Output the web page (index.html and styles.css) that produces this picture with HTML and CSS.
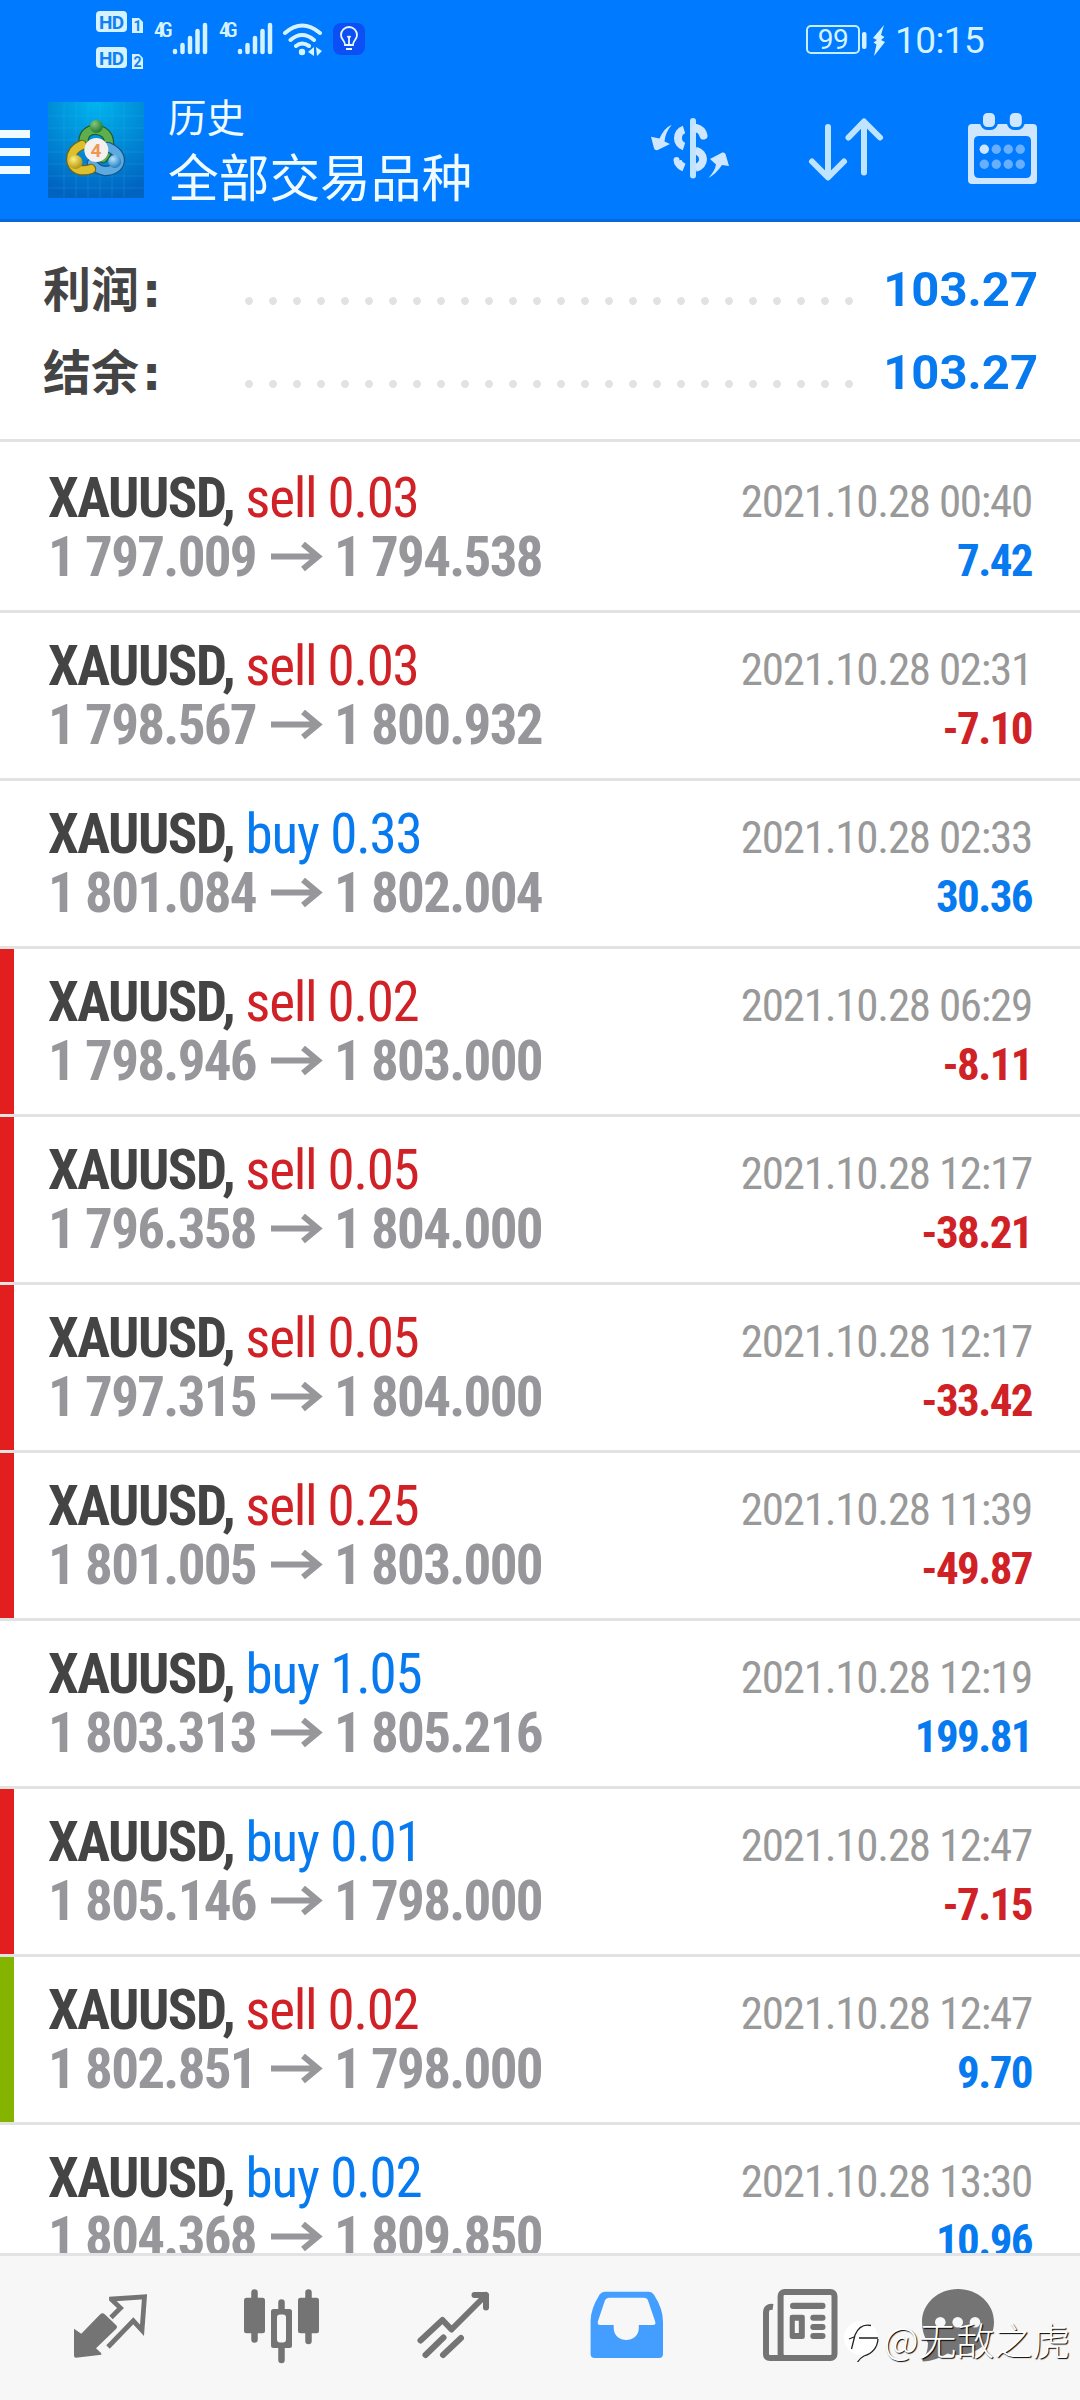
FILE: index.html
```html
<!DOCTYPE html>
<html lang="zh-CN">
<head>
<meta charset="utf-8">
<title>历史</title>
<link rel="stylesheet" href="styles.css">
</head>
<body>
<div class="screen">
  <header class="header">
    <div class="status">
      <svg class="hd" width="48" height="60" viewBox="0 0 48 60">
        <rect x="0" y="0" width="31" height="21" rx="4"/>
        <rect x="0" y="36" width="31" height="21" rx="4"/>
        <path d="M36 7h7l4 4v11H36zM36 43h7l4 4v11H36z"/>
        <text class="hd-label" x="15.5" y="17.500" textLength="25">HD</text>
        <text class="hd-label" x="15.5" y="53.500" textLength="25">HD</text>
        <text class="hd-num" x="41.500" y="20">1</text>
        <text class="hd-num" x="41.500" y="56">2</text>
      </svg>
      <svg class="signal" width="56" height="36" viewBox="0 0 56 36">
        <text class="net" x="-1" y="16" textLength="18.500">4G</text>
        <path d="M20 30v1M27.500 24v7M35 17v14M42.500 10v21M50 4v27"/>
      </svg>
      <svg class="signal second" width="56" height="36" viewBox="0 0 56 36">
        <text class="net" x="-1" y="16" textLength="18.500">4G</text>
        <path d="M20 30v1M27.500 24v7M35 17v14M42.500 10v21M50 4v27"/>
      </svg>
      <svg class="wifi" width="40" height="36" viewBox="0 0 40 36">
        <path class="arc" d="M2 11Q19-4 37 11M7.500 18Q19 8 31 18M13 24Q19 19 26 24"/>
        <circle cx="19" cy="30" r="3.200"/>
        <path d="M31 25v9l-6-4zM33 25l6 4-5 5z"/>
      </svg>
      <svg class="bulb" width="32" height="32" viewBox="0 0 32 32">
        <rect width="32" height="32" rx="8"/>
        <path d="M12 22c0-5-4-5-4-10a8 8 0 0 1 16 0c0 5-4 5-4 10zM13 26h6M16 15v6M14.500 13l1.500 2 1.500-2"/>
      </svg>
      <span class="spacer"></span>
      <span class="battery">99</span>
      <svg class="charge" width="24" height="34" viewBox="0 0 24 34">
        <rect x="2" y="8" width="4.500" height="17" rx="2"/>
        <path d="M24 1L13 14l4 2-3.500 2.500 3 2L14 32l11-14-4-2 3.500-3-3.500-2z"/>
      </svg>
      <span class="clock">10:15</span>
    </div>
    <div class="appbar">
      <div class="menu"><i></i><i></i><i></i></div>
      <svg class="logo" width="96" height="96" viewBox="0 0 96 96">
        <defs>
          <radialGradient id="bg" cx=".5" cy="0" r="1"><stop offset="0" stop-color="#00b5ee"/><stop offset="1" stop-color="#0063c0"/></radialGradient>
          <radialGradient id="g" cx=".35" cy=".3" r=".8"><stop offset="0" stop-color="#86c878"/><stop offset="1" stop-color="#15702d"/></radialGradient>
          <radialGradient id="y" cx=".35" cy=".3" r=".8"><stop offset="0" stop-color="#fff07b"/><stop offset="1" stop-color="#ac8a05"/></radialGradient>
          <radialGradient id="b" cx=".35" cy=".3" r=".8"><stop offset="0" stop-color="#b4e4ff"/><stop offset="1" stop-color="#1673bb"/></radialGradient>
        </defs>
        <rect width="96" height="96" fill="url(#bg)"/>
        <path d="M16 0v96M28 0v96M40 0v96M52 0v96M64 0v96M76 0v96M0 14h96M0 26h96M0 38h96M0 50h96M0 62h96M0 74h96M0 86h96" stroke="#45baf0" stroke-opacity=".2"/>
        <g stroke-linecap="round" fill="none">
          <path d="M36 42c-4-19 26-19 25 0q-1 8-6 14" stroke="#1b5f38" stroke-width="10.500"/>
          <path d="M36 42c-4-19 26-19 25 0q-1 8-6 14" stroke="#5fae4c" stroke-width="8"/>
          <path d="M60 45c19 8 13 24-3 24q-8-1-13-8" stroke="#14568b" stroke-width="10.500"/>
          <path d="M60 45c19 8 13 24-3 24q-8-1-13-8" stroke="#5caae0" stroke-width="8"/>
          <path d="M34 43c-15 6-13 23-2 25q6 1 11-1" stroke="#756511" stroke-width="10.500"/>
          <path d="M34 43c-15 6-13 23-2 25q6 1 11-1" stroke="#dcc02e" stroke-width="8"/>
        </g>
        <circle cx="48.300" cy="24.300" r="6.500" fill="url(#g)"/>
        <circle cx="27.500" cy="60" r="7" fill="url(#y)"/>
        <circle cx="66.700" cy="59.500" r="6.500" fill="url(#b)"/>
        <circle cx="48.300" cy="48" r="12" fill="#f4f0f0"/>
        <text class="logo-num" x="48" y="55">4</text>
      </svg>
      <div class="titles">
        <div class="subtitle">历史</div>
        <div class="title">全部交易品种</div>
      </div>
      <div class="actions">
        <svg width="90" height="80" viewBox="-1 0 90 80">
          <path class="line" d="M48 11v54.500"/>
          <path class="arc" d="M51 18q6 1.500 7.500 7.500" stroke-linecap="round"/>
          <path class="arc" d="M50.500 40.500c10 3 10 14.500 0 17.500M39 19.500c-8 2.500-8 14.500 0 17M39 57.500q-5-2-6.500-6.500"/>
          <circle cx="31.500" cy="50" r="3"/>
          <path d="M26.700 14.700Q19 18 14.500 28.500L6 26.700l3 11.500q.8 2.500 3.700 1.800L25 34l-5.500-2.500Q20 23 26.700 14.700zM63.300 68Q71 64 77 55l7 1-3.500-12q-.7-2-3.200-1.500L65 49l6 5.500Q70 61 63.300 68z"/>
        </svg>
        <svg width="90" height="80" viewBox="2 0 90 80">
          <path class="line" d="M28 17v50M12 51.500l16 16 16-16M64 12v50.500M48.500 27.500l15.500-16 16 16"/>
        </svg>
        <svg width="90" height="80" viewBox="0 0 90 80">
          <path fill-rule="evenodd" d="M12 14h61q4 0 4 4v52q0 4-4 4H12q-4 0-4-4V18q0-4 4-4zM19 26q-5 0-5 5v32q0 5 5 5h47q5 0 5-5V31q0-5-5-5z"/>
          <rect class="ring" x="21.500" y="1.500" width="15" height="17" rx="6"/>
          <rect class="ring" x="48.300" y="1.500" width="15" height="17" rx="6"/>
          <circle cx="24.300" cy="39.300" r="4.700"/>
          <g opacity=".5"><circle cx="36.300" cy="39.300" r="4.700"/><circle cx="48.300" cy="39.300" r="4.700"/><circle cx="60.300" cy="39.300" r="4.700"/><circle cx="24.300" cy="54.300" r="4.700"/><circle cx="36.300" cy="54.300" r="4.700"/><circle cx="48.300" cy="54.300" r="4.700"/><circle cx="60.300" cy="54.300" r="4.700"/></g>
        </svg>
      </div>
    </div>
  </header>

  <section class="summary">
    <div class="sum-row"><span class="sum-label">利润<i>:</i></span><span class="dots"></span><span class="sum-value">103.27</span></div>
    <div class="sum-row"><span class="sum-label">结余<i>:</i></span><span class="dots"></span><span class="sum-value">103.27</span></div>
  </section>

  <main class="list" id="list"></main>

  <nav class="tabs">
    <svg width="90" height="90" viewBox="0 0 90 90">
      <path d="M9 53.700l7.300 5L35 39.500q2.500-2.500 5 0L51 50q2 2 0 4L31 73.300l5.300 5v1.500L11 82.800q-2 0-2-2z"/>
      <path class="s" stroke-width="4.800" d="M46 42.500l9.500-9.500-9-8.500v-.5l33-2.200-2.500 33.500-8.700-9.500L43 72"/>
    </svg>
    <svg width="90" height="90" viewBox="0 0 90 90">
      <rect x="7" y="22.700" width="21" height="35.500" rx="2.500"/><rect x="61" y="22.700" width="21" height="35.500" rx="2.500"/>
      <path fill-rule="evenodd" d="M36.500 34h16q2.500 0 2.500 2.500v34q0 2.500-2.500 2.500h-16q-2.500 0-2.500-2.500v-34q0-2.500 2.500-2.500zM43 39.500q-3 0-3 3v22q0 3 3 3h3q3 0 3-3v-22q0-3-3-3z"/>
      <path class="s" stroke-width="6.500" stroke-linecap="round" d="M17.500 17.500v8M17.500 55v9.500M71.500 17.500v8M71.500 55v11M44.500 27.500v8M44.500 72v13"/>
    </svg>
    <svg width="90" height="90" viewBox="0 0 90 90">
      <path class="s" stroke-width="6" stroke-linecap="round" stroke-linejoin="round" d="M11.500 65.500l22-20.500 9 9.500L77 20M65.500 20H77v12.500M16.500 80l18-17.500M34 80l18-17"/>
    </svg>
    <svg class="active" width="90" height="90" viewBox="0 0 90 90">
      <path fill-rule="evenodd" d="M24 16.700h44q3 0 5 3 9 14 9 27V79q0 4-4 4H13.600q-4 0-4-4V46q0-12 9-26.500 2-2.800 5.400-2.800zM28 22.700q-3 0-4 2.500L17 46q-1 4 2 4h13.700v3c0 16 25.100 16 25.100 0v-3H72q3.500 0 2-4L67 25.500q-1-2.800-4-2.800z"/>
    </svg>
    <svg width="90" height="90" viewBox="0 0 90 90">
      <rect class="s" stroke-width="6" x="27.600" y="17" width="53.900" height="66" rx="4"/>
      <path class="s" stroke-width="6" d="M20 32q-7-1-7 6v41q0 4 4 4h14"/>
      <rect x="37" y="27.700" width="35.500" height="6.300" rx="3"/>
      <path fill-rule="evenodd" d="M36.700 42q0-2.300 2.500-2.300h10q2.600 0 2.600 2.300v20q0 2-2.600 2h-10q-2.500 0-2.500-2zM41.800 45.700V58h4V45.700z"/>
      <rect x="57.300" y="39.700" width="15.200" height="6" rx="3"/><rect x="57.300" y="48.900" width="15.200" height="6" rx="3"/><rect x="57.300" y="58" width="15.200" height="6" rx="3"/>
    </svg>
    <svg width="90" height="90" viewBox="0 0 90 90">
      <path d="M45 14c20 0 36 14.500 36 33S65 80 45 80q-6 0-10.500-1.500Q22 86 11 86.500q-2 0-1.500-1.500Q15 78 15 68 9 59 9 47c0-18.500 16-33 36-33z"/>
      <g class="hole"><circle cx="27.300" cy="47.300" r="5.300"/><circle cx="44.700" cy="47.300" r="5.300"/><circle cx="62" cy="47.300" r="5.300"/></g>
    </svg>
  </nav>

  <div class="mark">
    <svg width="40" height="46" viewBox="0 0 40 46">
      <circle cx="19" cy="22" r="17" fill="#fff"/>
      <path d="M9.500 33l3.500-14Q18 7 29 9.500M7 23l5-2M17 22h19M36 23q-1 13-14 17-4 2-7 7" fill="none" stroke="#222" stroke-width="1.300"/>
    </svg>
    <span>@无敌之虎</span>
  </div>
</div>
<script src="app.js"></script>
</body>
</html>
```
FILE: styles.css
```css
* { box-sizing: border-box; }
body { margin: 0; background: #fff; font-family: Roboto, "Noto Sans CJK SC", sans-serif; }
svg { display: block; flex: none; }
.screen { position: relative; width: 1080px; height: 2400px; overflow: hidden; display: flex; flex-direction: column; }

.header { flex: none; height: 222px; background: #007aff; border-bottom: 3px solid #0a69d6; color: #f0fbff; }
.status { height: 80px; display: flex; align-items: flex-start; padding: 11px 99px 0 96px; fill: #d5f3ff; }
.hd-label { font: 700 19px Roboto, sans-serif; fill: #1180f5; text-anchor: middle; }
.hd-num { font: 700 14px Roboto, sans-serif; fill: #1180f5; text-anchor: middle; }
.signal { margin: 10px 0 0 11px; overflow: visible; }
.signal.second { margin-left: 9px; }
.signal path { fill: none; stroke: #d5f3ff; stroke-width: 4.500; stroke-linecap: round; }
.net { font: 500 21px "Roboto Condensed", Roboto, sans-serif; }
.wifi { margin: 11px 0 0 7px; }
.wifi .arc { fill: none; stroke: #d5f3ff; stroke-width: 4; stroke-linecap: round; }
.bulb { margin: 12px 0 0 10px; }
.bulb rect { fill: #0b4ff5; }
.bulb path { fill: none; stroke: #eaf8ff; stroke-width: 1.800; }
.spacer { flex: 1; }
.battery { margin-top: 14px; width: 54px; height: 29px; border: 2px solid #c5eeff; border-radius: 5px; font-size: 28px; line-height: 26px; text-align: center; letter-spacing: -.5px; color: #d5f3ff; }
.charge { margin-top: 13px; overflow: visible; margin-right: 12px; }
.clock { margin-top: 9px; height: 42px; width: 86px; font-size: 37px; line-height: 42px; letter-spacing: -.6px; color: #d5f3ff; margin-left: -1px; white-space: nowrap; }

.appbar { display: flex; align-items: flex-start; padding-top: 22px; }
.menu { width: 30px; padding-top: 28px; display: flex; flex-direction: column; gap: 10px; }
.menu i { height: 8px; background: #f0fbff; }
.logo { margin-left: 18px; }
.logo-num { font: 700 19px Roboto, sans-serif; fill: #ee9652; text-anchor: middle; }
.titles { margin-left: 24px; }
.subtitle { font-size: 38.500px; line-height: 44px; margin-top: -5px; font-weight: 400; }
.title { font-size: 50.700px; line-height: 60px; margin-top: 9px; white-space: nowrap; }
.actions { margin-left: auto; margin-top: 8px; display: flex; gap: 68px; padding-right: 30px; fill: #cfe6ff; }
.actions .line { fill: none; stroke: #bfe4ff; stroke-width: 6; stroke-linecap: round; stroke-linejoin: round; }
.actions .arc { fill: none; stroke: #cfe6ff; stroke-width: 8; }
.ring { stroke: #007aff; stroke-width: 3; }

.summary { flex: none; height: 220px; padding: 26px 42px 0 43px; border-bottom: 3px solid #e2e2e2; margin-bottom: 3px; }
.sum-row { display: flex; align-items: center; height: 83px; }
.sum-label { width: 201px; margin: 2px -3px 0 0; font-size: 48px; font-weight: 700; line-height: 81px; color: #444; }
.sum-label i { font-family: "DejaVu Sans", sans-serif; font-style: normal; line-height: 1; margin-left: 3px; }
.dots { width: 624px; height: 8px; margin-top: 23px; background: radial-gradient(circle at 8px 4px, #e2e2e2 3.500px, transparent 4.300px) 0 0 / 24px 8px; }
.sum-value { margin-left: auto; font-size: 49px; font-weight: 700; color: #087af0; }

.list { flex: 1; min-height: 0; overflow: hidden; font-family: "Roboto Condensed", Roboto, sans-serif; }
.trade { height: 168px; border-bottom: 3px solid #e2e2e2; padding: 24px 48px 0 0; display: flex; }
.trade::before { content: ""; width: 14px; margin-top: -24px; }
.trade.sl::before { background: #e21e1e; }
.trade.tp::before { background: #84b400; }
.trade-body { flex: 1; margin-left: 34px; }
.line-row { display: flex; justify-content: space-between; align-items: baseline; height: 59px; line-height: 59px; white-space: nowrap; }
.symbol { font-size: 55px; letter-spacing: -1.300px; color: #d02226; }
.symbol b { color: #444; font-weight: 700; letter-spacing: -1.550px; }
.symbol.buy { color: #087af0; letter-spacing: -1.150px; }
.date { font-size: 45px; letter-spacing: -1.250px; margin-right: 0; color: #999; }
.price { font-size: 55px; letter-spacing: -1.700px; font-weight: 700; color: #97979b; display: flex; align-items: baseline; }
.price svg { margin: 0 11px 0 15px; }
.price path { fill: none; stroke: #97979b; stroke-width: 6; }
.profit { font-size: 45px; letter-spacing: -1.600px; margin-right: 0; font-weight: 700; color: #087af0; }
.profit.loss { color: #d02226; }

.tabs { flex: none; height: 147px; border-top: 3px solid #e3e3e6; background: #f7f7f7; padding: 19px 0 0 24px; display: grid; grid-template-columns: repeat(5, 172px) 148px; justify-items: center; fill: #747474; }
.tabs .s { fill: none; stroke: #747474; }
.tabs .active { fill: #439eff; }
.tabs .hole { fill: #f7f7f7; }

.mark { position: absolute; left: 842px; top: 2316px; display: flex; color: #fff; font: 300 38px/46px "Noto Sans CJK SC", sans-serif; text-shadow: 1px 1px 1px #000; white-space: nowrap; }
.mark span { margin-left: 2px; }
```
FILE: app.js
```js
const trades = [
  ["sell 0.03", "1 797.009", "1 794.538", "2021.10.28 00:40", "7.42", ""],
  ["sell 0.03", "1 798.567", "1 800.932", "2021.10.28 02:31", "-7.10", ""],
  ["buy 0.33", "1 801.084", "1 802.004", "2021.10.28 02:33", "30.36", ""],
  ["sell 0.02", "1 798.946", "1 803.000", "2021.10.28 06:29", "-8.11", "sl"],
  ["sell 0.05", "1 796.358", "1 804.000", "2021.10.28 12:17", "-38.21", "sl"],
  ["sell 0.05", "1 797.315", "1 804.000", "2021.10.28 12:17", "-33.42", "sl"],
  ["sell 0.25", "1 801.005", "1 803.000", "2021.10.28 11:39", "-49.87", "sl"],
  ["buy 1.05", "1 803.313", "1 805.216", "2021.10.28 12:19", "199.81", ""],
  ["buy 0.01", "1 805.146", "1 798.000", "2021.10.28 12:47", "-7.15", "sl"],
  ["sell 0.02", "1 802.851", "1 798.000", "2021.10.28 12:47", "9.70", "tp"],
  ["buy 0.02", "1 804.368", "1 809.850", "2021.10.28 13:30", "10.96", ""]
];
document.getElementById("list").innerHTML = trades.map(([side, open, close, date, profit, mark]) => `
  <article class="trade ${mark}">
    <div class="trade-body">
      <div class="line-row">
        <span class="symbol ${side.split(" ")[0]}"><b>XAUUSD,</b> ${side}</span>
        <span class="date">${date}</span>
      </div>
      <div class="line-row">
        <span class="price">${open}<svg width="52" height="34" viewBox="0 0 52 34"><path d="M0 14.500h48M32 2l15 12.500L32 27"/></svg>${close}</span>
        <span class="profit ${profit[0] === "-" ? "loss" : ""}">${profit}</span>
      </div>
    </div>
  </article>`).join("");
```
